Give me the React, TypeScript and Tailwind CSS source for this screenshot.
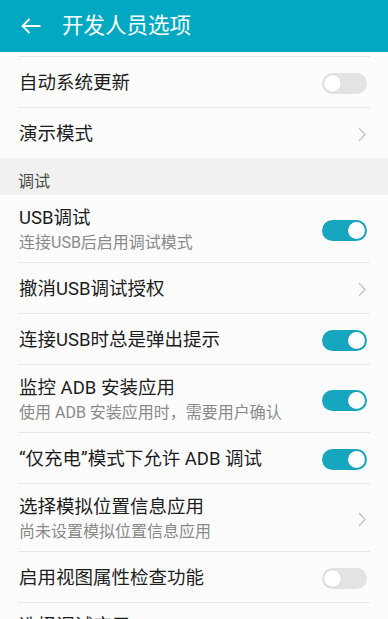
type Row = {
  title: string
  sub?: string
  kind: "toggle" | "link"
  on?: boolean
}

const general: Row[] = [
  { title: "自动系统更新", kind: "toggle", on: false },
  { title: "演示模式", kind: "link" },
]

const debug: Row[] = [
  { title: "USB调试", sub: "连接USB后启用调试模式", kind: "toggle", on: true },
  { title: "撤消USB调试授权", kind: "link" },
  { title: "连接USB时总是弹出提示", kind: "toggle", on: true },
  { title: "监控 ADB 安装应用", sub: "使用 ADB 安装应用时，需要用户确认", kind: "toggle", on: true },
  { title: "“仅充电”模式下允许 ADB 调试", kind: "toggle", on: true },
  { title: "选择模拟位置信息应用", sub: "尚未设置模拟位置信息应用", kind: "link" },
  { title: "启用视图属性检查功能", kind: "toggle", on: false },
  { title: "选择调试应用", sub: "尚未设置要调试的应用", kind: "link" },
]

function Toggle({ on }: { on?: boolean }) {
  return (
    <div
      className={`w-[45px] h-[21px] rounded-full p-[2px] flex ${
        on ? "bg-[#16a6bf] justify-end" : "bg-[#e3e3e3] justify-start"
      }`}
    >
      <div className="w-[17px] h-[17px] rounded-full bg-white shadow-[0_0_1px_rgba(0,0,0,0.25)]" />
    </div>
  )
}

function Chevron() {
  return (
    <svg width="8" height="15" viewBox="0 0 8 15" fill="none" className="mr-px">
      <path d="M1 1l6 6.5L1 14" stroke="#c2c2c2" strokeWidth="1.3" />
    </svg>
  )
}

function SettingRow({ row }: { row: Row }) {
  return (
    <div className="px-[18px]">
      <div
        className={`flex items-center justify-between border-b border-[#e8e8e8] pl-px pr-[3px] ${
          row.sub ? "h-[68px] pt-[3px]" : "h-[51px] pt-[2px]"
        }`}
      >
        <div className="flex flex-col">
          <span className="text-[18.5px] leading-[24px] text-[#1c1c1c]">{row.title}</span>
          {row.sub && (
            <span className="text-[16px] leading-[22px] text-[#8a8a8a] mt-[2px]">{row.sub}</span>
          )}
        </div>
        {row.kind === "toggle" ? <Toggle on={row.on} /> : <Chevron />}
      </div>
    </div>
  )
}

export default function App() {
  return (
    <div
      className="w-[388px] h-[619px] overflow-hidden bg-[#fcfcfc]"
      style={{ fontFamily: 'Roboto, "Noto Sans CJK SC", sans-serif' }}
    >
      <div className="h-[52px] bg-[#00a9c1] flex items-center">
        <svg width="20" height="16" viewBox="0 0 20 16" fill="none" className="ml-[21px]">
          <path d="M19.5 8H1.5M8.5 1L1.5 8l7 7" stroke="white" strokeWidth="1.8" />
        </svg>
        <h1 className="ml-[21px] text-[21.5px] text-white leading-none">开发人员选项</h1>
      </div>

      <div className="px-[18px]">
        <div className="h-[5px] border-b border-[#e8e8e8]" />
      </div>

      {general.map((r) => (
        <SettingRow key={r.title} row={r} />
      ))}

      <div className="h-[37px] bg-[#f1f1f1] flex items-center px-[18px] pt-[10px] -mt-px">
        <span className="text-[16px] text-[#4a4a4a] leading-none">调试</span>
      </div>

      {debug.map((r) => (
        <SettingRow key={r.title} row={r} />
      ))}
    </div>
  )
}
